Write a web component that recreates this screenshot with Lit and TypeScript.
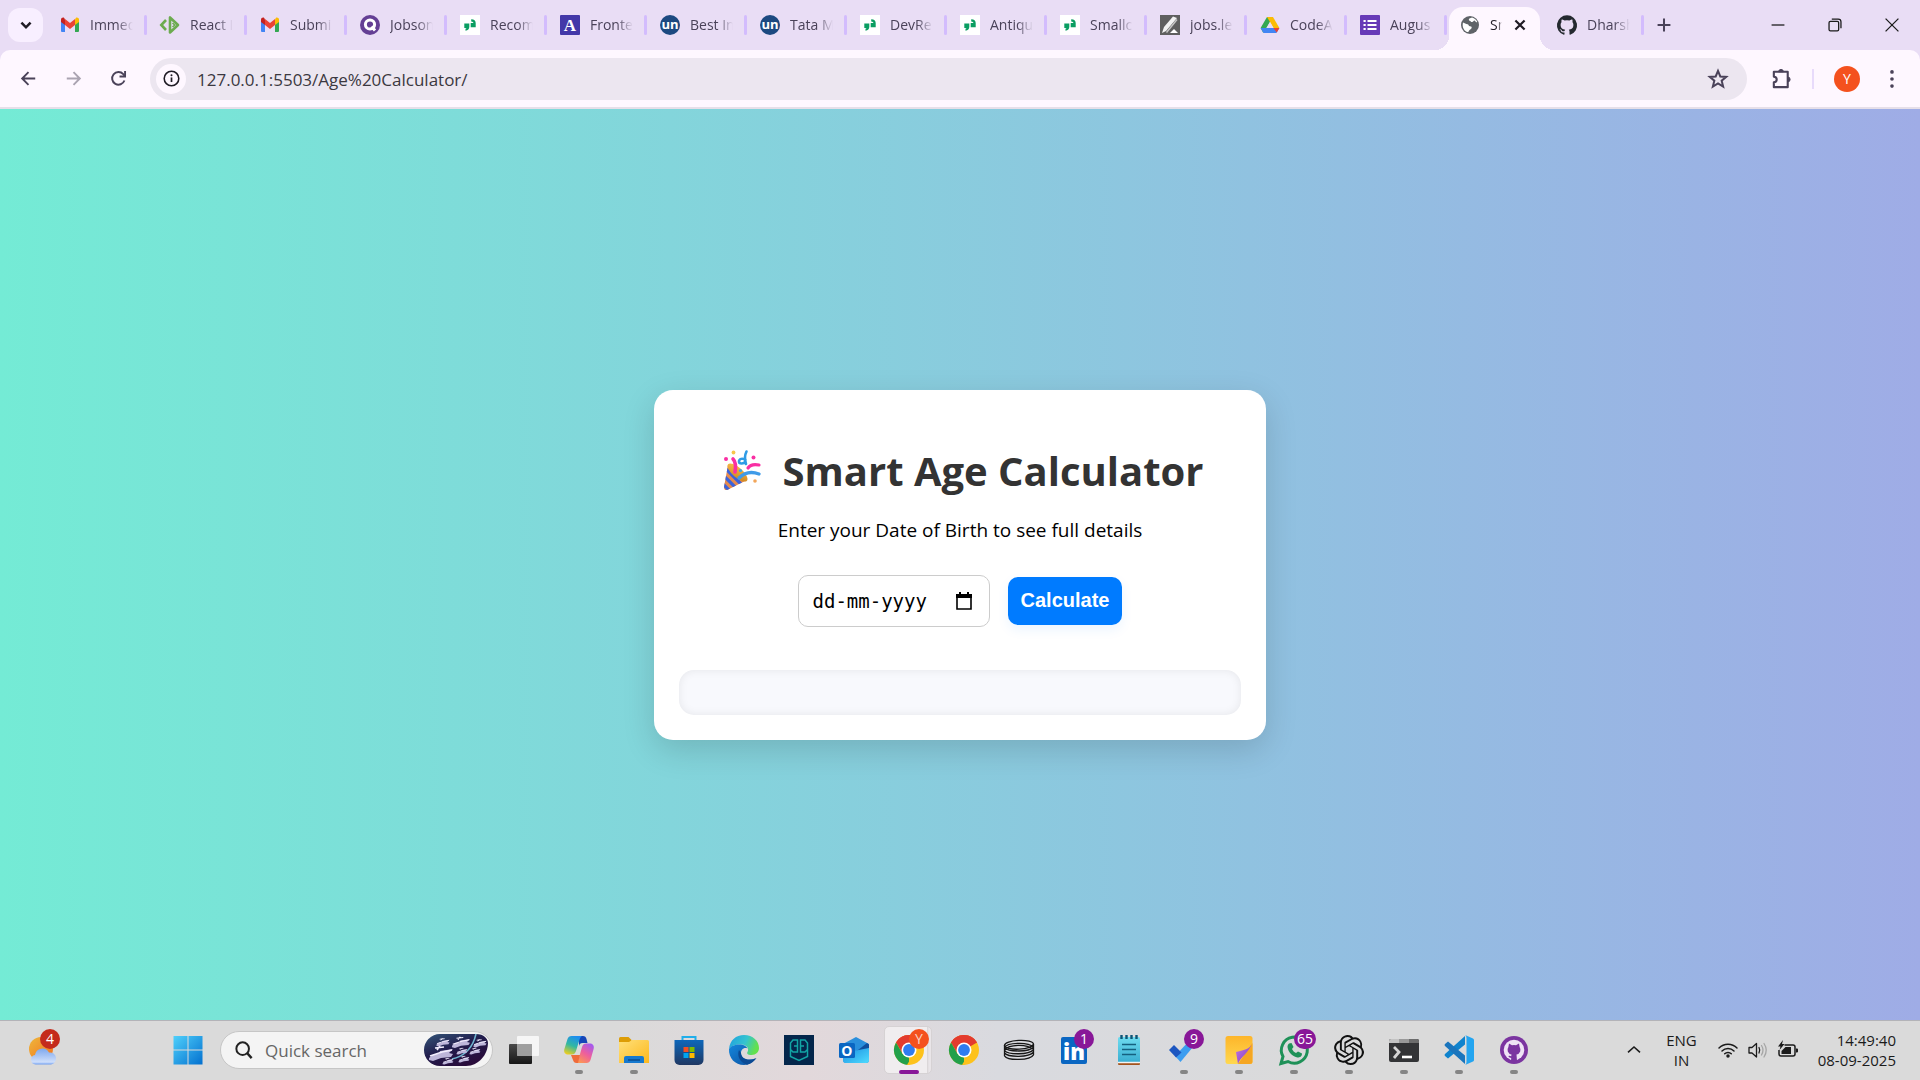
import { LitElement, html, css, svg, nothing } from "lit";
import type { TemplateResult } from "lit";
import { customElement, property } from "lit/decorators.js";
import { classMap } from "lit/directives/class-map.js";

/* ---------- site icons (20 x 20) ---------- */

const gmail = svg`<svg viewBox="0 0 20 20"><path d="M1 4v12a1 1 0 0 0 1 1h3V8.500z" fill="#4285f4"/><path d="M19 4v12a1 1 0 0 1-1 1h-3V8.500z" fill="#34a853"/><path d="M15 4.500V10l4-3V4.800c0-2-2-2.800-3.200-1.900z" fill="#fbbc04"/><path d="M5 4.500V10L1 7V4.800c0-2 2-2.800 3.200-1.900z" fill="#c5221f"/><path d="M5 10V4l5 4 5-4v6l-5 4z" fill="#ea4335"/></svg>`;
const codeTag = svg`<svg viewBox="0 0 20 20"><path d="M6 5L1.300 10 6 15" fill="none" stroke="#6cab4f" stroke-width="2.600"/><path d="M10 2.500v15l8-7.500z" fill="none" stroke="#6cab4f" stroke-width="2.600" stroke-linejoin="round"/><path d="M12.500 8l2.200 2-2.200 2" fill="none" stroke="#6cab4f" stroke-width="1.500"/></svg>`;
const jobs = svg`<svg viewBox="0 0 20 20"><circle cx="10" cy="10" r="10" fill="#643f94"/><circle cx="10" cy="9.500" r="4.600" fill="none" stroke="#fff" stroke-width="3"/><path d="M11.500 11.500l3.500 4" stroke="#fff" stroke-width="3"/></svg>`;
const quotes = svg`<svg viewBox="0 0 20 20"><rect width="20" height="20" fill="#fff"/><path d="M4.300 8.500h5v3.300c0 2.200-1.300 3.600-3.800 3.900v-1.900l1.200-.8H4.300z" fill="#0a9e62"/><path d="M15.700 12.200h-5V8h2.700c0-1-.6-1.500-2.200-1.600V4.300c3 .1 4.500 1.500 4.500 4z" fill="#0a9e62"/></svg>`;
const letterA = svg`<svg viewBox="0 0 20 20"><rect width="20" height="20" rx="1" fill="#4338a8"/><text x="10" y="16" text-anchor="middle" font-family="Liberation Serif, serif" font-weight="700" font-size="17" fill="#fff">A</text></svg>`;
const un = svg`<svg viewBox="0 0 20 20"><circle cx="10" cy="10" r="10" fill="#1c4980"/><text x="10" y="14" text-anchor="middle" font-family="Open Sans, sans-serif" font-weight="700" font-size="13" fill="#fff">un</text></svg>`;
const pen = svg`<svg viewBox="0 0 20 20"><rect width="20" height="20" fill="#5f5f5f"/><path d="M2 18l2-6L13 1.500l4 1.500L6 16z" fill="#f2f2f2"/><path d="M17 4.500L6.500 17.500" stroke="#c4c4c4" stroke-width="1.500"/><path d="M10 18l4-4 4 4z" fill="#fff"/></svg>`;
const drive = svg`<svg viewBox="0 0 20 20"><path d="M7 2h6l-6.500 11-3.200 5L.6 13z" fill="#34a853"/><path d="M7 2h6l6.400 11h-6z" fill="#fbbc04"/><path d="M.6 13h18.800l-2.700 4.500c-.3.400-.6.500-1 .500H4.300c-.4 0-.7-.1-1-.5z" fill="#4285f4"/><path d="M13.400 13h6l-2.700 4.500z" fill="#ea4335"/><path d="M10 6.800L13.600 13H6.400z" fill="#e9ddf5"/></svg>`;
const form = svg`<svg viewBox="0 0 20 20"><rect width="20" height="20" rx="1" fill="#673ab7"/><path d="M7.500 6h9M7.500 10h9M7.500 14h9M3.500 6h2.200M3.500 10h2.200M3.500 14h2.200" stroke="#fff" stroke-width="2"/></svg>`;
const globe = svg`<svg viewBox="0 0 20 20"><circle cx="10" cy="10" r="9" fill="#5f6368"/><path d="M3 7.500c1.500.5 3 1.800 4.500 1.800 1.200 0 1 2 2.500 2s2 .8 1.500 2-2 1-2.500 2.500-1 1.500-2.500 1C3.500 15 2 11.500 3 7.500zM12 2.500c-1.500 1-3 .5-3.200 2s1.500 1 2 2 2.200.5 2.700-.5 1.500-.5 2 .5 1.200.8 1.800.5C16.500 5 14.500 3 12 2.500z" fill="#fff"/></svg>`;
const octocat = "M10 .3a10 10 0 0 0-3.200 19.500c.5.100.7-.2.700-.500v-1.900c-2.800.600-3.400-1.200-3.400-1.200-.4-1.100-1.100-1.400-1.100-1.400-.9-.6.100-.6.100-.6 1 .1 1.500 1 1.500 1 .9 1.600 2.400 1.100 3 .9.1-.7.300-1.100.6-1.400-2.200-.2-4.600-1.100-4.600-4.900 0-1.100.4-2 1-2.700-.1-.2-.4-1.200.1-2.600 0 0 .9-.3 2.800 1a9.600 9.600 0 0 1 5 0c1.900-1.300 2.800-1 2.800-1 .5 1.400.2 2.400.1 2.600.6.700 1 1.600 1 2.700 0 3.900-2.300 4.700-4.600 4.900.4.300.7.900.7 1.900v2.700c0 .3.200.6.700.5A10 10 0 0 0 10 .3z";
const github = svg`<svg viewBox="0 0 20 20"><path d=${octocat} fill="#24292f"/></svg>`;

/* ---------- browser chrome icons ---------- */

const line = (d: string, w = 2) =>
  svg`<svg viewBox="0 0 24 24" fill="none" stroke="currentColor" stroke-width=${w}><path d=${d}/></svg>`;

const chevronDown = line("M7 9.500l5 5 5-5", 2.8);
const back = line("M20.500 12H4M12 4l-8 8 8 8", 2.4);
const forward = line("M3.500 12H20M12 4l8 8-8 8", 2.4);
const reload = svg`<svg viewBox="0 0 24 24" fill="none" stroke="currentColor" stroke-width="2.400"><path d="M19.500 14.500A8 8 0 1 1 18 6.500l1.800 2.200"/><path d="M20.300 2.500v7h-7"/></svg>`;
const info = svg`<svg viewBox="0 0 24 24"><circle cx="12" cy="12" r="10.300" fill="none" stroke="currentColor" stroke-width="2.200"/><path d="M12 10.500V17" stroke="currentColor" stroke-width="2.400"/><circle cx="12" cy="7.500" r="1.400" fill="currentColor"/></svg>`;
const star = line("M12 3.200l2.500 6 6.500.5-5 4.200 1.600 6.400-5.600-3.500-5.600 3.500L8 13.900 3 9.700l6.500-.5z", 2.2);
const puzzle = svg`<svg viewBox="0 0 24 24"><path d="M4 5h14.500v16H4v-5c4-.5 4-5.500 0-6z" fill="none" stroke="currentColor" stroke-width="2.200" stroke-linejoin="round"/><path d="M9 5a2.500 2.500 0 0 1 5 0zM18.500 10.500a2.500 2.500 0 0 1 0 5z" fill="currentColor" stroke="currentColor"/></svg>`;
const kebab = svg`<svg viewBox="0 0 24 24" fill="currentColor"><circle cx="12" cy="3.500" r="2.200"/><circle cx="12" cy="12" r="2.200"/><circle cx="12" cy="20.500" r="2.200"/></svg>`;
const cross = line("M7 7l10 10M17 7L7 17", 2.4);
const plus = line("M12 5v14M5 12h14", 2.2);
const minimise = line("M5 12h14", 1.4);
const restore = svg`<svg viewBox="0 0 24 24" fill="none" stroke="currentColor" stroke-width="1.400"><rect x="5.500" y="8" width="10.500" height="10.500" rx="1.500"/><path d="M8.500 5.500h7a3 3 0 0 1 3 3v7"/></svg>`;
const closeWindow = line("M5 5l14 14M19 5L5 19", 1.4);

/* ---------- page icons ---------- */

const popper = svg`<svg viewBox="0 0 38 41"><defs><linearGradient id="cone" x1="0" y1="0" x2="1" y2="1"><stop offset="0" stop-color="#ffc04d"/><stop offset="1" stop-color="#c9801c"/></linearGradient><clipPath id="coneClip"><path d="M5 15L1 37c-.2 2.500 1.400 3.700 3.700 2.800L24 30C20 26 12 17 5 15z"/></clipPath></defs><path d="M5 15L1 37c-.2 2.500 1.400 3.700 3.700 2.800L24 30C20 26 12 17 5 15z" fill="#e58a4e"/><g clip-path="url(#coneClip)" stroke="#3a62dc" stroke-width="3.200" fill="none"><path d="M2 18l17 17M-1 24l15 15M-3 31l12 12"/></g><ellipse cx="14.500" cy="22.500" rx="12.500" ry="5" transform="rotate(41 14.500 22.500)" fill="url(#cone)"/><path d="M10 9c3 3 3 7 2 13" stroke="#f92fa3" stroke-width="3.600" fill="none" stroke-linecap="round"/><path d="M25 18c2-3 6-4 11-3" stroke="#f92fa3" stroke-width="3.200" fill="none" stroke-linecap="round"/><path d="M23.500 1.500c-2 4-2 8-.5 12.500M22.500 10c-3-2.500-6.500-1-6.500 1.500s4.500 3 6.500 0" stroke="#2e9be6" stroke-width="2.600" fill="none" stroke-linecap="round"/><path d="M16 28c5-5 12-7 20-4" stroke="#3f9be8" stroke-width="3.400" fill="none" stroke-linecap="round"/><circle cx="10.500" cy="2.500" r="1.900" fill="#f7c64a"/><circle cx="3" cy="9" r="2" fill="#f92fa3"/><circle cx="30.500" cy="7.500" r="2" fill="#f92fa3"/><circle cx="17.500" cy="20.500" r="1.600" fill="#38a8ea"/><circle cx="32" cy="31" r="1.800" fill="#f2a65a"/></svg>`;
const calendar = svg`<svg viewBox="0 0 16 18"><path d="M1 3h14v14H1z" fill="none" stroke="#000" stroke-width="1.600"/><path d="M0 2h16v4H0zM3 0h2v3H3zM11 0h2v3h-2z"/></svg>`;

/* ---------- taskbar icons (30 x 30) ---------- */

const weather = svg`<svg viewBox="0 0 34 40"><defs><linearGradient id="sun" x1="0" y1="0" x2="1" y2="1"><stop offset="0" stop-color="#edb73c"/><stop offset="1" stop-color="#f4711c"/></linearGradient><linearGradient id="cloud" x1="0" y1="0" x2="0" y2="1"><stop offset="0" stop-color="#7fa9ee"/><stop offset=".4" stop-color="#a3c1f4"/><stop offset=".85" stop-color="#cfdffb"/><stop offset="1" stop-color="#6f9df0"/></linearGradient></defs><circle cx="13" cy="19" r="12" fill="url(#sun)"/><path d="M7.500 34.500a4.800 4.800 0 0 1-.5-9.500 7.500 7.500 0 0 1 14-2.500A6 6 0 0 1 23 34.500z" fill="url(#cloud)"/></svg>`;
const windows = svg`<svg viewBox="0 0 30 30"><defs><linearGradient id="win" x1="0" y1="0" x2="1" y2="1"><stop offset="0" stop-color="#4fd0fb"/><stop offset="1" stop-color="#0370cf"/></linearGradient></defs><path d="M.5 1h14v13.500H.5zM15.500 1h14v13.500h-14zM.5 15.500h14V29.500H.5zM15.500 15.500h14V29.500h-14z" fill="url(#win)"/></svg>`;
const magnifier = svg`<svg viewBox="0 0 20 20" fill="none" stroke="#222" stroke-width="2.200"><circle cx="8.500" cy="8.500" r="7"/><path d="M13.500 13.500l5 5.500" stroke-width="2.600"/></svg>`;
const drone = (x: number, y: number, s: number) =>
  svg`<g transform="translate(${x} ${y}) scale(${s})"><path d="M-12 5l5-4h5l1-3 13-2-4 4 4 1-2 3-10 1-8 3-4-1z" fill="#bdb6da"/><path d="M-11 3l12-4 10-2M-6-5l9-1M-4-3l3-4" stroke="#f3efff" stroke-width="1.600" fill="none"/></g>`;
const searchArt = svg`<svg viewBox="0 0 64 32"><defs><linearGradient id="night" x1="0" y1="0" x2=".7" y2="1"><stop offset="0" stop-color="#35577a"/><stop offset=".5" stop-color="#211c4c"/><stop offset="1" stop-color="#2a0b3a"/></linearGradient></defs><path d="M16 0h36c8 0 12 5 12 9 0 11-9 23-22 23H16a16 16 0 0 1 0-32z" fill="url(#night)"/><path d="M52 0c-3 13-11 22-24 25" fill="none" stroke="#6fb4cf" stroke-width="1.500"/>${drone(17, 19, 1)}${drone(19, 8, 0.55)}${drone(37, 8, 0.75)}${drone(56, 9, 0.55)}${drone(38, 17, 0.45)}${drone(24, 27, 0.45)}${drone(40, 25, 0.45)}${drone(51, 17, 0.45)}</svg>`;
const taskView = svg`<svg viewBox="0 0 30 30"><defs><linearGradient id="tv" x1="0" y1="0" x2="0" y2="1"><stop offset="0" stop-color="#4a4a4a"/><stop offset="1" stop-color="#161616"/></linearGradient></defs><rect y="9" width="23" height="20" rx="1" fill="url(#tv)"/><rect x="8" y="1" width="22" height="20" rx="1" fill="#fff" opacity=".75"/><rect x="8" y="9" width="15" height="12" fill="#8f8f8f" opacity=".75"/></svg>`;
const copilot = svg`<svg viewBox="0 0 30 30"><defs><linearGradient id="cpA" x1=".6" y1="0" x2=".2" y2="1"><stop offset="0" stop-color="#1c8df0"/><stop offset=".5" stop-color="#31b8a2"/><stop offset="1" stop-color="#f2ce1b"/></linearGradient><linearGradient id="cpB" x1=".8" y1="0" x2=".2" y2="1"><stop offset="0" stop-color="#a35af0"/><stop offset=".5" stop-color="#ee5f9c"/><stop offset="1" stop-color="#fd9a50"/></linearGradient></defs><path d="M15 1h4c2 0 3 1 3.500 3l1 4h-5c-2 0-3 1-3.500 3z" fill="#1646b8"/><path d="M7.500 1H18c-1.500 1-2 2-2.600 4L12 16c-.8 2.500-2 3.500-4.500 3.500H4C1 19.500-.5 17 .4 14L3.500 4C4.200 2 5.500 1 7.500 1z" fill="url(#cpA)"/><path d="M22.500 28H12c1.500-1 2-2 2.600-4L18 12c.8-2.500 2-3.500 4.500-3.500H26c3 0 4.500 2.500 3.600 5.500L26.500 25c-.7 2-2 3-4 3z" fill="url(#cpB)"/><path d="M7 20l2 5c.6 2 1.500 3 3.500 3h1.500l2-8z" fill="#ef6b3a"/></svg>`;
const folder = svg`<svg viewBox="0 0 30 30"><defs><linearGradient id="fo" x1="0" y1="0" x2="1" y2="1"><stop offset="0" stop-color="#ffe07a"/><stop offset="1" stop-color="#fcb81c"/></linearGradient></defs><path d="M0 3.500Q0 2 1.500 2h8l3 3v5H0z" fill="#dd9d06"/><path d="M0 7h10l3-2h15.500Q30 5 30 6.500V28H0z" fill="url(#fo)"/><path d="M5 28v-5q0-2 2-2h16q2 0 2 2v5z" fill="#1679cf"/><path d="M9 25h12" stroke="#0a4d8f" stroke-width="1.500"/></svg>`;
const store = svg`<svg viewBox="0 0 30 30"><defs><linearGradient id="st" x1="0" y1="0" x2="0" y2="1"><stop offset="0" stop-color="#0d67ba"/><stop offset="1" stop-color="#203863"/></linearGradient></defs><path d="M8.500 6V2h13v4" fill="none" stroke="#20aeea" stroke-width="2"/><path d="M.5 5h29v20a5 5 0 0 1-5 5h-19a5 5 0 0 1-5-5z" fill="url(#st)"/><path d="M9.500 12h5v5h-5z" fill="#f25022"/><path d="M15.500 12h5v5h-5z" fill="#7fba00"/><path d="M9.500 18h5v5h-5z" fill="#00a4ef"/><path d="M15.500 18h5v5h-5z" fill="#ffb900"/></svg>`;
const edge = svg`<svg viewBox="0 0 30 30"><defs><linearGradient id="edA" x1="0" y1="0" x2="1" y2=".3"><stop offset="0" stop-color="#1f9fe0"/><stop offset=".6" stop-color="#35c4cf"/><stop offset="1" stop-color="#63e04e"/></linearGradient><linearGradient id="edB" x1="0" y1="0" x2="1" y2="1"><stop offset="0" stop-color="#1487dd"/><stop offset="1" stop-color="#0c4f9e"/></linearGradient></defs><path d="M0 14C1 5 7 0 15 0c9 0 15 6 15 13 0 4-3 7-7.500 7-4 0-5-1.500-4-3 2-3-.5-7-6-7.500C7 9 2 11 0 14z" fill="url(#edA)"/><path d="M0 14c2-3.500 7-5 12-4.500 3 .3 5.500 2 6.500 4-3.500-1.500-6.500 1-6.500 4.500 0 5 6 8.500 14.500 5.500A15 15 0 0 1 15 30C6 30-.5 23 0 14z" fill="url(#edB)"/><path d="M10 15c-2 5 0 12 8 14.700A15 15 0 0 0 27.500 23C20 27 12 24 12 18z" fill="#0b4a94"/></svg>`;
const gg = svg`<svg viewBox="0 0 30 30"><rect width="30" height="30" fill="#04264b"/><path d="M13.500 5H9L6.500 8v6.500L9 17h4.500V5zM16.500 5H21l2.500 3v6.500L21 17h-4.500V5zM6.500 12v9.500L15 25.500l8.500-4V12M10 11h3.500M20 11h-3.500" fill="none" stroke="#12a5a5" stroke-width="1.500"/></svg>`;
const outlook = svg`<svg viewBox="0 0 30 30"><defs><linearGradient id="ol" x1="0" y1="0" x2="1" y2="1"><stop offset="0" stop-color="#1a8ce0"/><stop offset="1" stop-color="#4fdcff"/></linearGradient></defs><path d="M4 9l13-7 13 7v16a3 3 0 0 1-3 3H7a3 3 0 0 1-3-3z" fill="#2a8fdc"/><path d="M14 19L28 8l2 1.500V13L17 22z" fill="#0f4f9e"/><path d="M4 18l26-5v12a3 3 0 0 1-3 3H7a3 3 0 0 1-3-3z" fill="url(#ol)"/><rect y="8" width="16" height="15" rx="1.500" fill="#0a66c2"/><text x="7.800" y="20.500" text-anchor="middle" font-family="Open Sans, sans-serif" font-weight="700" font-size="14" fill="#fff">O</text></svg>`;
const chrome = svg`<svg viewBox="0 0 30 30"><circle cx="15" cy="15" r="15" fill="#fdc21c"/><path d="M15 15L2 7.500A15 15 0 0 1 28 7.500z" fill="#e33b2e"/><path d="M15 7.500h13A15 15 0 0 0 2 7.500l6.500 11z" fill="#e33b2e"/><path d="M2 7.500l6.500 11.200 6.500 3.800L15 30A15 15 0 0 1 2 7.500z" fill="#22a04a"/><path d="M21.500 18.700L15 30a15 15 0 0 1-2-.2l5-8z" fill="#fdc21c"/><circle cx="15" cy="15" r="7.500" fill="#fff"/><circle cx="15" cy="15" r="5.900" fill="#2f7cf0"/></svg>`;
const spring = svg`<svg viewBox="0 0 30 30" fill="none" stroke="#161616" stroke-width="1.300"><ellipse cx="15" cy="9.800" rx="14.500" ry="4.400" transform="rotate(-3 15 10)"/><path d="M.5 10v11M29.500 9v11M.5 12.500C3 7.500 24 6.500 29.500 12M.5 15C5 9.500 22 8.500 29.500 14.500M.5 12.500C4 17 25 17.500 29.500 12M.5 15.300C4 20 25 20 29.500 14.800M.5 18C4 22.500 25 22.500 29.500 17.300M.5 20.800C4 26 26 25.500 29.500 19.800"/></svg>`;
const linkedin = svg`<svg viewBox="0 0 30 30"><rect x="2" y="2" width="26" height="27" rx="2" fill="#0a66c2"/><text x="4" y="25" font-family="Open Sans, sans-serif" font-weight="800" font-size="22" fill="#fff">in</text></svg>`;
const notepad = svg`<svg viewBox="0 0 30 30"><defs><linearGradient id="np" x1="0" y1="0" x2="0" y2="1"><stop offset="0" stop-color="#6fdcf0"/><stop offset="1" stop-color="#38acd0"/></linearGradient></defs><rect x="4" y="24" width="22" height="6" rx="1" fill="#a4531c"/><rect x="4" y="2" width="22" height="26" rx="1.500" fill="url(#np)"/><path d="M4 27.500h22" stroke="#f3f3f3" stroke-width="1.500"/><path d="M7.500 0v4M12.500 0v4M17.500 0v4M22.500 0v4" stroke="#0d5476" stroke-width="2.400"/><path d="M8 9.500h14M8 14.500h14M8 19.500h14" stroke="#15607f" stroke-width="1.700"/></svg>`;
const todo = svg`<svg viewBox="0 0 30 30"><path d="M6 21L21 5l5 4.500L11.500 27z" fill="#3c9df0"/><path d="M0 15l5-5 7.500 7.500-5.500 5z" fill="#1c56c0"/></svg>`;
const sticky = svg`<svg viewBox="0 0 30 30"><defs><linearGradient id="sy" x1="0" y1="0" x2="0" y2="1"><stop offset="0" stop-color="#fdb52a"/><stop offset="1" stop-color="#ffd84f"/></linearGradient><linearGradient id="sp" x1="0" y1="0" x2="1" y2="1"><stop offset="0" stop-color="#c77be8"/><stop offset="1" stop-color="#7a35bd"/></linearGradient></defs><rect x="1.500" y="1" width="27" height="28" rx="2.500" fill="url(#sy)"/><path d="M28.500 8L14 29h12q2.500 0 2.500-2.500z" fill="#f5a623"/><path d="M28 8c-2 6-7 7-16 9l2 12c2-7 11-11 14-21z" fill="url(#sp)"/></svg>`;
const whatsapp = svg`<svg viewBox="0 0 30 30"><path d="M2 28.500l2-7A13 13 0 1 1 9 26.500z" fill="none" stroke="#1f9158" stroke-width="3"/><path d="M10 8.500l2.500-.5 2 4-1.500 2c1 2 2 3 4 4l2-1.500 4 2c0 3-2 4-4.500 4C14 22 9 17 8.500 12c0-1.500.5-2.500 1.500-3.500z" fill="#1f9158"/></svg>`;
const knot =
  "M22.282 9.821a5.985 5.985 0 0 0-.516-4.910 6.046 6.046 0 0 0-6.510-2.900A6.065 6.065 0 0 0 4.981 4.182a5.985 5.985 0 0 0-3.998 2.900 6.046 6.046 0 0 0 .743 7.097 5.980 5.980 0 0 0 .510 4.911 6.051 6.051 0 0 0 6.515 2.900A5.985 5.985 0 0 0 13.260 24a6.056 6.056 0 0 0 5.772-4.206 5.990 5.990 0 0 0 3.998-2.900 6.056 6.056 0 0 0-.748-7.073zM13.260 22.430a4.476 4.476 0 0 1-2.876-1.040l.141-.081 4.779-2.758a.795.795 0 0 0 .393-.681v-6.737l2.020 1.169a.071.071 0 0 1 .038.052v5.583a4.504 4.504 0 0 1-4.495 4.494zM3.600 18.304a4.471 4.471 0 0 1-.535-3.014l.142.085 4.783 2.759a.771.771 0 0 0 .780 0l5.843-3.369v2.332a.080.080 0 0 1-.033.062L9.740 19.950a4.500 4.500 0 0 1-6.140-1.646zM2.341 7.896a4.485 4.485 0 0 1 2.366-1.973V11.600a.766.766 0 0 0 .388.677l5.815 3.355-2.020 1.168a.076.076 0 0 1-.071 0l-4.830-2.787A4.504 4.504 0 0 1 2.341 7.872zm16.597 3.855l-5.833-3.387L15.119 7.200a.076.076 0 0 1 .071 0l4.830 2.792a4.494 4.494 0 0 1-.677 8.104v-5.678a.790.790 0 0 0-.405-.667zm2.010-3.023l-.141-.085-4.774-2.782a.776.776 0 0 0-.785 0L9.409 9.230V6.897a.066.066 0 0 1 .028-.061l4.830-2.787a4.499 4.499 0 0 1 6.681 4.660zm-12.640 4.135l-2.020-1.164a.080.080 0 0 1-.038-.057V6.075a4.499 4.499 0 0 1 7.376-3.454l-.142.081L8.704 5.460a.795.795 0 0 0-.393.681zm1.097-2.365l2.602-1.500 2.607 1.500v2.999l-2.597 1.500-2.607-1.500z";
const chatgpt = svg`<svg viewBox="0 0 24 24"><path d=${knot} fill="#111"/></svg>`;
const terminal = svg`<svg viewBox="0 0 30 30"><rect y="4" width="30" height="23" rx="2" fill="#333436"/><path d="M0 8V6q0-2 2-2h8v4z" fill="#c3c3c3"/><path d="M10 4h10v4H10z" fill="#999"/><path d="M20 4h8q2 0 2 2v2H20z" fill="#6c6c6c"/><path d="M5 12l5 5-5 6" fill="none" stroke="#d4d4d4" stroke-width="2.800"/><path d="M13 22h10" stroke="#fff" stroke-width="2.600"/></svg>`;
const vscode = svg`<svg viewBox="0 0 30 30"><path d="M21 1v8.500L4 23.500 1 21q-1-1 0-2z" fill="#0f83cd"/><path d="M21 29v-8.500L4 6.500 1 9q-1 1 0 2z" fill="#1a75bd"/><path d="M21 0l8 3.500q1 .5 1 1.500v20q0 1-1 1.500L21 30q1.500-.5 1.500-3V3q0-2.500-1.500-3z" fill="#24a5f0"/></svg>`;
const githubDesktop = svg`<svg viewBox="0 0 30 30"><circle cx="15" cy="15" r="14" fill="#7b34a0"/><circle cx="15" cy="15" r="10.300" fill="#efe3f5"/><path d="M10 8.500l3 1.700q2-.5 4 0l3-1.700.6 3.500q1.400 2 .6 4.500-1 2.500-3.700 3l.5 6.500h-6l.2-3q-2 0-3-2 1.700-.5 3 .3l.3-1.800q-2.700-.5-3.700-3-.8-2.500.6-4.500z" fill="#7b34a0"/></svg>`;

const chevronUp = line("M3 15.500l9-8 9 8", 2.4);
const wifi = svg`<svg viewBox="0 0 20 20" fill="none" stroke="#1b1b1b" stroke-width="1.500" stroke-linecap="round"><path d="M1 8a12.500 12.500 0 0 1 18 0M4 11a8.500 8.500 0 0 1 12 0M6.700 13.800a4.600 4.600 0 0 1 6.600 0"/><circle cx="10" cy="16" r="1" fill="#1b1b1b"/></svg>`;
const volume = svg`<svg viewBox="0 0 20 20" fill="none" stroke="#1b1b1b" stroke-width="1.300" stroke-linecap="round"><path d="M1 7.500h3l4.500-4v13.500L4 13H1z" stroke-linejoin="round"/><path d="M11 7.500q1.500 2.700 0 5.500"/><path d="M13.500 5.500q3 4.700 0 9.500M16 3.500q4.500 6.700 0 13.500" stroke="#a5a5a5"/></svg>`;
const battery = svg`<svg viewBox="0 0 20 20"><path d="M6.500 5H15q2 0 2 2v7q0 2-2 2H3q-2 0-2-2v-4" fill="none" stroke="#1b1b1b" stroke-width="1.500"/><path d="M3.500 11l4-4H13v7H3.500zM18 8.500h1q1 0 1 1v2q0 1-1 1h-1zM5 0L0 6.500h2.500L1.500 10 6.500 4H4z" fill="#1b1b1b"/></svg>`;

interface Tab {
  title: string;
  icon: TemplateResult;
  active?: boolean;
}

const tabs: Tab[] = [
  { title: "Immed", icon: gmail },
  { title: "React I", icon: codeTag },
  { title: "Submi", icon: gmail },
  { title: "Jobson", icon: jobs },
  { title: "Recom", icon: quotes },
  { title: "Fronte", icon: letterA },
  { title: "Best In", icon: un },
  { title: "Tata M", icon: un },
  { title: "DevRe", icon: quotes },
  { title: "Antiqu", icon: quotes },
  { title: "Smallc", icon: quotes },
  { title: "jobs.le", icon: pen },
  { title: "CodeA", icon: drive },
  { title: "Augus", icon: form },
  { title: "Sm", icon: globe, active: true },
  { title: "Dharsh", icon: github },
];

interface App {
  name: string;
  icon: TemplateResult;
  running?: boolean;
  focused?: boolean;
  badge?: string;
}

const apps: App[] = [
  { name: "Task view", icon: taskView },
  { name: "Copilot", icon: copilot, running: true },
  { name: "File Explorer", icon: folder, running: true },
  { name: "Microsoft Store", icon: store },
  { name: "Edge", icon: edge },
  { name: "Games", icon: gg },
  { name: "Outlook", icon: outlook },
  { name: "Chrome", icon: chrome, focused: true, badge: "Y" },
  { name: "Chrome profile", icon: chrome },
  { name: "Spring", icon: spring },
  { name: "LinkedIn", icon: linkedin, badge: "1" },
  { name: "Notepad", icon: notepad },
  { name: "To Do", icon: todo, running: true, badge: "9" },
  { name: "Sticky Notes", icon: sticky, running: true },
  { name: "WhatsApp", icon: whatsapp, running: true, badge: "65" },
  { name: "ChatGPT", icon: chatgpt, running: true },
  { name: "Terminal", icon: terminal, running: true },
  { name: "Visual Studio Code", icon: vscode, running: true },
  { name: "GitHub Desktop", icon: githubDesktop, running: true },
];

const reset = css`
  * {
    box-sizing: border-box;
  }
  button,
  input {
    margin: 0;
    padding: 0;
    border: 0;
    background: none;
    color: inherit;
    font: inherit;
    outline: none;
  }
  button {
    display: flex;
    align-items: center;
    justify-content: center;
    flex: none;
  }
  svg {
    display: block;
    width: 100%;
    height: 100%;
    overflow: visible;
  }
`;

@customElement("browser-tab")
export class BrowserTab extends LitElement {
  @property({ attribute: false }) tab!: Tab;

  static styles = [
    reset,
    css`
      :host {
        display: block;
        box-sizing: border-box;
        flex: 0 1 100px;
        min-width: 0;
      }
      :host([active]) {
        flex-basis: 97px;
        padding: 0 4px 0 2px;
      }
      .tab {
        position: relative;
        display: flex;
        align-items: center;
        height: 43px;
        padding-bottom: 8px;
        padding-left: 13px;
      }
      .open {
        display: flex;
        justify-content: flex-start;
        gap: 10px;
        flex: 1;
        min-width: 0;
        color: #4a4259;
      }
      .icon {
        width: 20px;
        height: 20px;
        flex: none;
      }
      .title {
        flex: 1;
        min-width: 0;
        overflow: hidden;
        white-space: nowrap;
        text-align: left;
        line-height: 24px;
        mask-image: linear-gradient(to right, #000 calc(100% - 16px), transparent);
      }
      .divider {
        width: 3px;
        height: 20px;
        margin-left: 11px;
        border-radius: 2px;
        background: #d3bcfd;
      }
      .active {
        padding-left: 11px;
        padding-right: 9px;
        border-radius: 14px 14px 0 0;
        background: #fef7ff;
      }
      .active .open {
        color: #1f1b24;
      }
      .active .title {
        mask-image: linear-gradient(to right, #000 calc(100% - 4px), transparent);
      }
      .active::before,
      .active::after {
        content: "";
        position: absolute;
        bottom: 0;
        width: 14px;
        height: 14px;
      }
      .active::before {
        right: 100%;
        background: radial-gradient(circle at 0 0, transparent 14px, #fef7ff 14px);
      }
      .active::after {
        left: 100%;
        background: radial-gradient(circle at 100% 0, transparent 14px, #fef7ff 14px);
      }
      .close {
        width: 22px;
        height: 22px;
        margin-left: 7px;
        color: #1f1b24;
      }
    `,
  ];

  render() {
    const { title, icon, active } = this.tab;
    return html`<div class=${classMap({ tab: true, active: !!active })}>
      <button class="open">
        <span class="icon">${icon}</span>
        <span class="title">${title}</span>
      </button>
      ${active
        ? html`<button class="close" aria-label="Close tab">${cross}</button>`
        : html`<span class="divider"></span>`}
    </div>`;
  }
}

@customElement("browser-frame")
export class BrowserFrame extends LitElement {
  static styles = [
    reset,
    css`
      :host {
        display: block;
        background: #e9ddf5;
        font-size: 14px;
        color: #4a4259;
      }
      .strip {
        display: flex;
        align-items: flex-start;
        padding: 7px 0 0 8px;
      }
      .search-tabs {
        width: 35px;
        height: 34px;
        margin: 1px 4px 0 0;
        border-radius: 12px;
        background: #f8efff;
        color: #1f1b24;
      }
      .glyph {
        width: 22px;
        height: 22px;
      }
      .tabs {
        display: flex;
        flex: 0 1 1600px;
        min-width: 0;
      }
      .new-tab {
        width: 34px;
        height: 36px;
      }
      .window {
        display: flex;
        margin-left: auto;
        color: #1b1b1b;
      }
      .window button {
        width: 57px;
        height: 36px;
      }
      .toolbar {
        display: flex;
        align-items: center;
        height: 59px;
        padding: 0 11px;
        border-bottom: 2px solid #e6dfe9;
        border-radius: 10px 10px 0 0;
        background: #fef7ff;
      }
      .tool {
        width: 34px;
        height: 34px;
        margin-right: 11px;
      }
      .tool .glyph {
        width: 19px;
        height: 19px;
      }
      .off {
        color: #aaa3b1;
      }
      .address {
        display: flex;
        align-items: center;
        flex: 1;
        height: 42px;
        margin: 0 17px 0 4px;
        padding: 0 18px 0 6px;
        border-radius: 21px;
        background: #ece6f0;
      }
      .info {
        width: 30px;
        height: 30px;
        border-radius: 50%;
        background: #fef7ff;
        color: #1f1b24;
      }
      .info .glyph {
        width: 17px;
        height: 17px;
      }
      .url {
        flex: 1;
        min-width: 0;
        padding-top: 1px;
        margin-left: 11px;
        font-size: 17px;
        color: #3b3840;
      }
      .puzzle {
        margin-right: 14px;
      }
      .puzzle .glyph {
        width: 23px;
        height: 23px;
      }
      .address .star {
        width: 22px;
        height: 22px;
      }
      .bar {
        width: 2px;
        height: 20px;
        background: #e8dbfb;
      }
      .avatar {
        width: 26px;
        height: 26px;
        margin: 0 15px 0 20px;
        border-radius: 50%;
        background: #f4511e;
        color: #fff;
        font-size: 14px;
      }
      .menu {
        width: 34px;
        height: 34px;
      }
      .menu .glyph {
        width: 20px;
        height: 20px;
      }
    `,
  ];

  render() {
    return html`
      <div class="strip">
        <button class="search-tabs" aria-label="Search tabs"><span class="glyph">${chevronDown}</span></button>
        <div class="tabs">${tabs.map((t) => html`<browser-tab ?active=${t.active} .tab=${t}></browser-tab>`)}</div>
        <button class="new-tab" aria-label="New tab"><span class="glyph">${plus}</span></button>
        <div class="window">
          <button aria-label="Minimise"><span class="glyph">${minimise}</span></button>
          <button aria-label="Restore"><span class="glyph">${restore}</span></button>
          <button aria-label="Close"><span class="glyph">${closeWindow}</span></button>
        </div>
      </div>
      <div class="toolbar">
        <button class="tool" aria-label="Back"><span class="glyph">${back}</span></button>
        <button class="tool off" aria-label="Forward"><span class="glyph">${forward}</span></button>
        <button class="tool" aria-label="Reload"><span class="glyph">${reload}</span></button>
        <div class="address">
          <button class="info" aria-label="Site information"><span class="glyph">${info}</span></button>
          <input class="url" type="text" aria-label="Address" value="127.0.0.1:5503/Age%20Calculator/" />
          <button class="star" aria-label="Bookmark">${star}</button>
        </div>
        <button class="tool puzzle" aria-label="Extensions"><span class="glyph">${puzzle}</span></button>
        <span class="bar"></span>
        <button class="avatar" aria-label="Profile">Y</button>
        <button class="menu" aria-label="Menu"><span class="glyph">${kebab}</span></button>
      </div>
    `;
  }
}

@customElement("age-calculator")
export class AgeCalculator extends LitElement {
  static styles = [
    reset,
    css`
      :host {
        display: flex;
        align-items: center;
        justify-content: center;
        background: linear-gradient(to right, #74ebd5, #9face6);
      }
      .card {
        width: 612px;
        max-width: 100%;
        padding: 25px;
        border-radius: 19px;
        background: #fff;
        box-shadow: 0 10px 32px rgba(0, 0, 0, 0.15);
        text-align: center;
      }
      .heading {
        display: flex;
        align-items: center;
        justify-content: center;
        gap: 22px;
        margin: 29px 0 18px;
        padding-left: 6px;
        font-size: 40px;
        line-height: 54px;
        font-weight: 700;
        color: #333;
      }
      .popper {
        width: 38px;
        height: 41px;
        flex: none;
      }
      .lead {
        margin: 0;
        font-size: 19px;
        line-height: 28px;
        color: #000;
      }
      .form {
        display: flex;
        align-items: center;
        justify-content: center;
        gap: 18px;
        margin-top: 31px;
      }
      .date {
        display: flex;
        align-items: center;
        width: 192px;
        height: 52px;
        padding: 0 17px 0 14px;
        border: 1px solid #ccc;
        border-radius: 10px;
      }
      .field {
        flex: 1;
        min-width: 0;
        font: 19px "DejaVu Sans Mono", monospace;
        color: #000;
      }
      .field::placeholder {
        color: #000;
        opacity: 1;
      }
      .picker {
        width: 16px;
        height: 18px;
      }
      .submit {
        height: 48px;
        padding: 0 13px;
        border-radius: 10px;
        background: #007bff;
        box-shadow: 0 5px 12px rgba(0, 123, 255, 0.08);
        color: #fff;
        font: 700 20px "Liberation Sans", Arial, sans-serif;
      }
      .result {
        height: 45px;
        margin-top: 43px;
        border-radius: 15px;
        background: #f8f9fd;
        box-shadow: inset 0 0 10px rgba(0, 0, 0, 0.08);
      }
    `,
  ];

  render() {
    return html`<section class="card">
      <h1 class="heading"><span class="popper">${popper}</span>Smart Age Calculator</h1>
      <p class="lead">Enter your Date of Birth to see full details</p>
      <div class="form">
        <div class="date">
          <input class="field" type="text" inputmode="numeric" placeholder="dd-mm-yyyy" aria-label="Date of Birth" />
          <button class="picker" aria-label="Show date picker">${calendar}</button>
        </div>
        <button class="submit">Calculate</button>
      </div>
      <div class="result"></div>
    </section>`;
  }
}

@customElement("task-bar")
export class TaskBar extends LitElement {
  static styles = [
    reset,
    css`
      :host {
        display: flex;
        box-sizing: border-box;
        align-items: center;
        height: 60px;
        padding-bottom: 1px;
        border-top: 1px solid #b3b3b8;
        background: linear-gradient(to right, #dadada 32%, #e2d8db 42%, #d9dadf 52%, #dadada 72%);
        color: #1b1b1b;
      }
      .weather {
        position: relative;
        width: 34px;
        height: 40px;
        margin: 0 98px 0 28px;
      }
      .start {
        width: 55px;
        height: 48px;
      }
      .icon {
        width: 30px;
        height: 30px;
      }
      .search {
        display: flex;
        align-items: center;
        width: 273px;
        height: 38px;
        margin: 0 3px 0 5px;
        padding: 0 4px 0 14px;
        border: 1px solid #c6c6c6;
        border-radius: 19px;
        background: #f4f4f4;
      }
      .lens {
        width: 18px;
        height: 18px;
        flex: none;
      }
      .query {
        flex: 1;
        min-width: 0;
        margin-left: 12px;
        font-size: 17px;
      }
      .query::placeholder {
        color: #666;
        opacity: 1;
      }
      .art {
        width: 64px;
        height: 32px;
        flex: none;
      }
      .app {
        position: relative;
        width: 55px;
        height: 48px;
      }
      .running::after,
      .focused::after {
        content: "";
        position: absolute;
        bottom: 0;
        width: 8px;
        height: 4px;
        border-radius: 2px;
        background: #858585;
      }
      .focused::before {
        content: "";
        position: absolute;
        inset: 0 4px 0 3px;
        border: 1px solid #d6d2d4;
        border-radius: 5px;
        background: linear-gradient(to right, #f0edef 42px, #d6d2d4 42px, #e9e5e8 44px);
      }
      .focused .icon {
        position: relative;
      }
      .focused::after {
        width: 20px;
        background: #881798;
      }
      .badge {
        position: absolute;
        top: 3px;
        left: 28px;
        min-width: 20px;
        height: 20px;
        padding: 0 3px;
        border-radius: 10px;
        background: #881798;
        color: #fff;
        font-size: 14px;
        line-height: 20px;
        text-align: center;
      }
      .orange {
        background: #f4511e;
        color: #fbd3c4;
      }
      .weather .badge {
        top: -1px;
        left: 12px;
        background: #c42b1c;
      }
      .tray {
        display: flex;
        align-items: center;
        gap: 10px;
        margin-left: auto;
        padding-right: 24px;
        font-size: 15px;
        line-height: 20px;
      }
      .small {
        width: 20px;
        height: 20px;
      }
      .up {
        width: 16px;
        height: 16px;
      }
      .language {
        display: block;
        margin: 0 11px 0 14px;
        text-align: center;
      }
      .clock {
        display: block;
        margin-left: 10px;
        text-align: right;
      }
      .row {
        display: block;
      }
    `,
  ];

  private app(a: App) {
    return html`<button
      class=${classMap({ app: true, running: !!a.running, focused: !!a.focused })}
      aria-label=${a.name}
    >
      <span class="icon">${a.icon}</span>
      ${a.badge ? html`<span class=${classMap({ badge: true, orange: !!a.focused })}>${a.badge}</span>` : nothing}
    </button>`;
  }

  render() {
    return html`
      <button class="weather" aria-label="Widgets">${weather}<span class="badge">4</span></button>
      <button class="start" aria-label="Start"><span class="icon">${windows}</span></button>
      <div class="search">
        <span class="lens">${magnifier}</span>
        <input class="query" type="text" aria-label="Search" placeholder="Quick search" />
        <span class="art">${searchArt}</span>
      </div>
      ${apps.map((a) => this.app(a))}
      <div class="tray">
        <button class="up" aria-label="Hidden icons">${chevronUp}</button>
        <button class="language"><span class="row">ENG</span><span class="row">IN</span></button>
        <button class="small" aria-label="Network">${wifi}</button>
        <button class="small" aria-label="Volume">${volume}</button>
        <button class="small" aria-label="Battery">${battery}</button>
        <button class="clock"><span class="row">14:49:40</span><span class="row">08-09-2025</span></button>
      </div>
    `;
  }
}

@customElement("app-root")
export class AppRoot extends LitElement {
  static styles = css`
    :host {
      display: flex;
      flex-direction: column;
      min-height: 100vh;
      font-family: "Open Sans", "Noto Sans", sans-serif;
    }
    .page {
      flex: 1;
    }
  `;

  render() {
    return html`<browser-frame></browser-frame><age-calculator class="page"></age-calculator><task-bar></task-bar>`;
  }
}
